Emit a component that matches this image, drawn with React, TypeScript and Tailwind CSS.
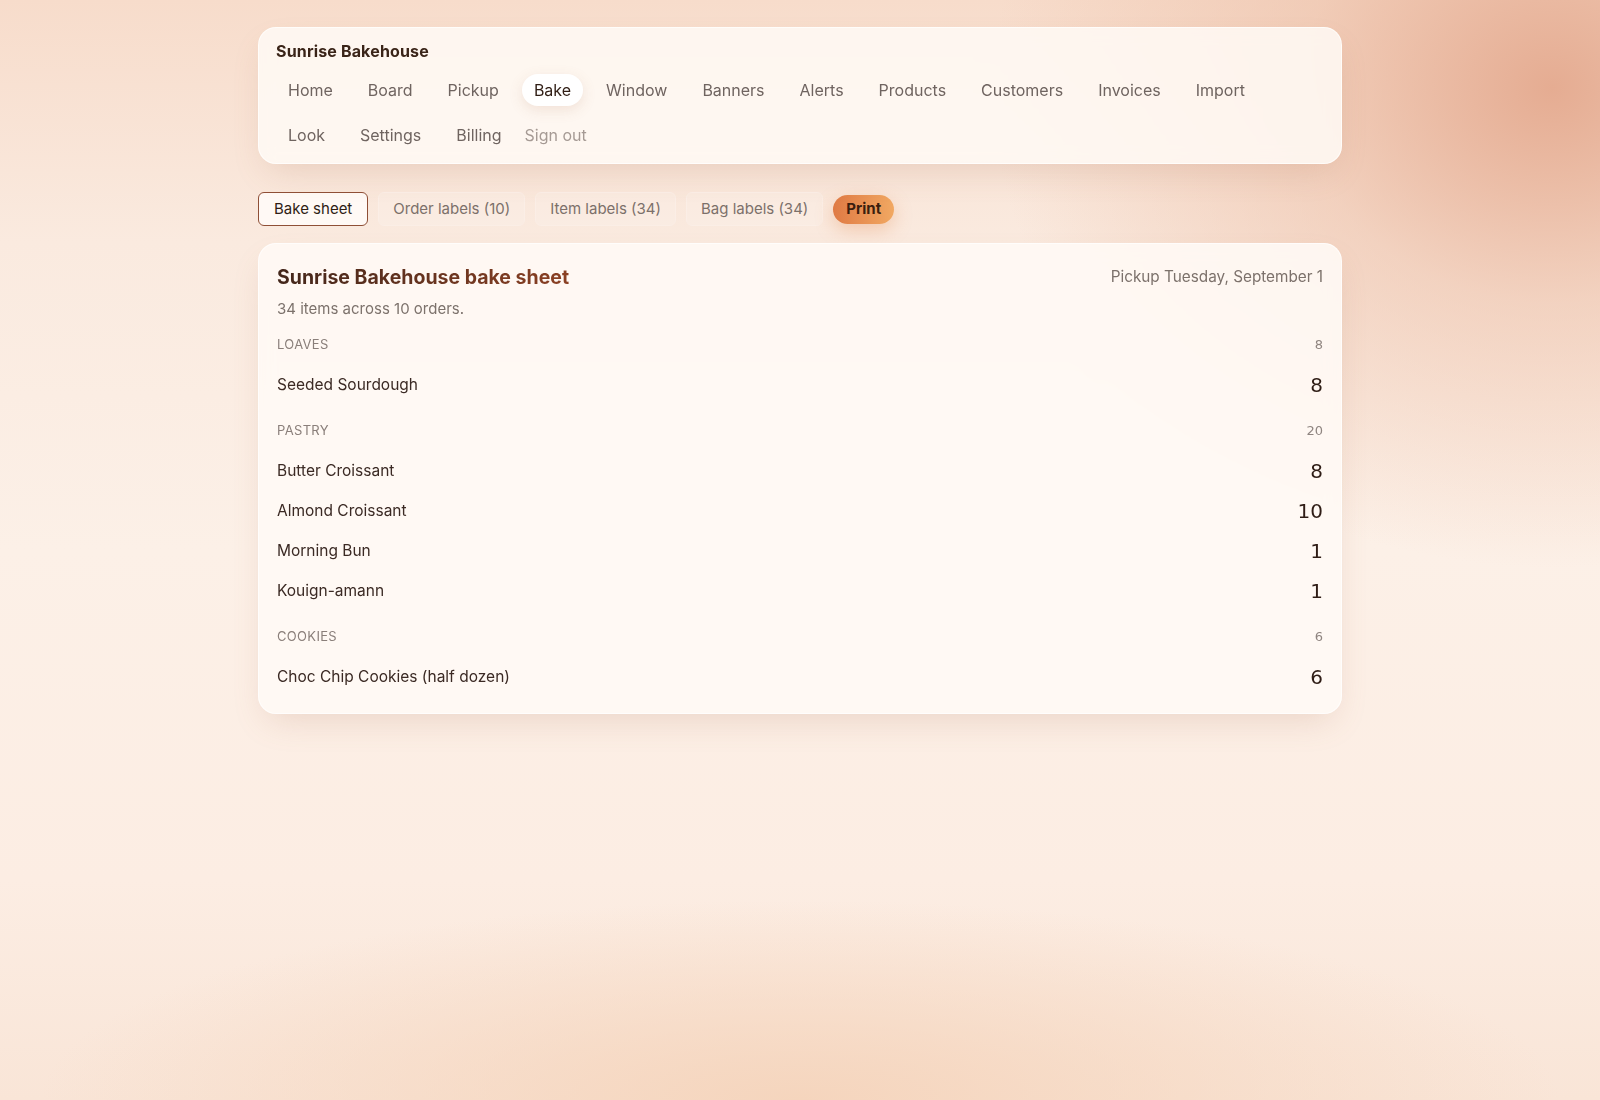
import React from "react";

const navRow1 = ["Home", "Board", "Pickup", "Bake", "Window", "Banners", "Alerts", "Products", "Customers", "Invoices", "Import"];
const navRow2 = ["Look", "Settings", "Billing"];

const groups = [
  { name: "LOAVES", total: 8, items: [{ n: "Seeded Sourdough", c: 8 }] },
  {
    name: "PASTRY",
    total: 20,
    items: [
      { n: "Butter Croissant", c: 8 },
      { n: "Almond Croissant", c: 10 },
      { n: "Morning Bun", c: 1 },
      { n: "Kouign-amann", c: 1 },
    ],
  },
  { name: "COOKIES", total: 6, items: [{ n: "Choc Chip Cookies (half dozen)", c: 6 }] },
];

function NavItem({ label }: { label: string }) {
  const active = label === "Bake";
  return (
    <span
      className={
        active
          ? "h-8 px-3 flex items-center rounded-full bg-white text-[#2f1d14] shadow-[0_4px_14px_rgba(170,110,80,0.16)]"
          : "h-8 px-3 flex items-center rounded-full text-[#6f6460]"
      }
    >
      {label}
    </span>
  );
}

export default function App() {
  return (
    <div
      className="min-h-screen w-full font-['Inter','Liberation_Sans',sans-serif] bg-[radial-gradient(ellipse_560px_480px_at_97%_8%,#e5ac92_0%,rgba(236,190,166,0.55)_45%,rgba(245,215,198,0)_100%),radial-gradient(ellipse_760px_200px_at_50%_100%,#f5d5bd_0%,rgba(245,213,189,0)_100%),linear-gradient(180deg,#f7dccb_0%,#faeadf_22%,#fcf0e7_50%,#fcede3_80%,#f9e5d7_100%)]"
    >
      <div className="w-[1084px] mx-auto pt-[27px] flex flex-col">
        {/* Nav card */}
        <div className="rounded-[18px] bg-[#fffaf6]/85 backdrop-blur-sm border border-white/70 shadow-[0_14px_34px_-10px_rgba(170,110,80,0.22)] pt-[13px] px-[17px] pb-[12px]">
          <div className="h-5 leading-5 text-[16px] font-bold tracking-[0.01em] text-[#3a2418]">Sunrise Bakehouse</div>
          <div className="mt-[13px] flex flex-col gap-[13px] text-[16px]">
            <div className="flex items-center gap-[11px]">
              {navRow1.map((l) => (
                <NavItem key={l} label={l} />
              ))}
            </div>
            <div className="flex items-center gap-[11px]">
              {navRow2.map((l) => (
                <NavItem key={l} label={l} />
              ))}
              <span className="h-8 flex items-center text-[#a59a94]">Sign out</span>
            </div>
          </div>
        </div>

        {/* Tabs */}
        <div className="mt-[28px] flex items-center gap-[10px] text-[15px]">
          <button className="h-[34px] px-[15px] rounded-[6px] border border-[#8f4f36] bg-[#fff9f5] text-[#2f1d14]">
            Bake sheet
          </button>
          <button className="h-[34px] px-[14px] rounded-[6px] border border-[#fbeee6] bg-white/15 text-[#7c706a]">
            Order labels (10)
          </button>
          <button className="h-[34px] px-[14px] rounded-[6px] border border-[#fbeee6] bg-white/15 text-[#7c706a]">
            Item labels (34)
          </button>
          <button className="h-[34px] px-[14px] rounded-[6px] border border-[#fbeee6] bg-white/15 text-[#7c706a]">
            Bag labels (34)
          </button>
          <button className="h-[29px] px-[13px] rounded-full bg-gradient-to-r from-[#df7a44] to-[#f1a862] font-bold text-[#3b1e0e] shadow-[0_6px_18px_rgba(228,138,80,0.35)]">
            Print
          </button>
        </div>

        {/* Bake sheet card */}
        <div className="mt-[17px] rounded-[18px] bg-[#fffaf6]/90 backdrop-blur-sm border border-white/70 shadow-[0_14px_34px_-10px_rgba(170,110,80,0.22)] pt-[19px] px-[18px] pb-[16px]">
          <div className="flex items-center justify-between">
            <h1 className="leading-7 text-[19.5px] font-bold inline-block bg-gradient-to-r from-[#43261a] to-[#8b4023] bg-clip-text text-transparent">
              Sunrise Bakehouse bake sheet
            </h1>
            <span className="text-[15.3px] text-[#7c716b]">Pickup Tuesday, September 1</span>
          </div>
          <p className="mt-[7px] leading-[22px] text-[15px] text-[#7c716b]">34 items across 10 orders.</p>
          <div className="flex flex-col">
            {groups.map((g) => (
              <div key={g.name} className="mt-[6px] first:mt-[5px] flex flex-col">
                <div className="h-10 flex items-center justify-between">
                  <span className="text-[13px] tracking-wide text-[#8a7f7a]">{g.name}</span>
                  <span className="text-[13px] text-[#8f8580] font-['DejaVu_Sans',sans-serif]">{g.total}</span>
                </div>
                {g.items.map((it) => (
                  <div key={it.n} className="h-10 flex items-center justify-between">
                    <span className="text-[15.5px] text-[#3b2a24]">{it.n}</span>
                    <span className="text-[20px] text-[#2f1d16] font-['DejaVu_Sans',sans-serif]">{it.c}</span>
                  </div>
                ))}
              </div>
            ))}
          </div>
        </div>
      </div>
    </div>
  );
}
